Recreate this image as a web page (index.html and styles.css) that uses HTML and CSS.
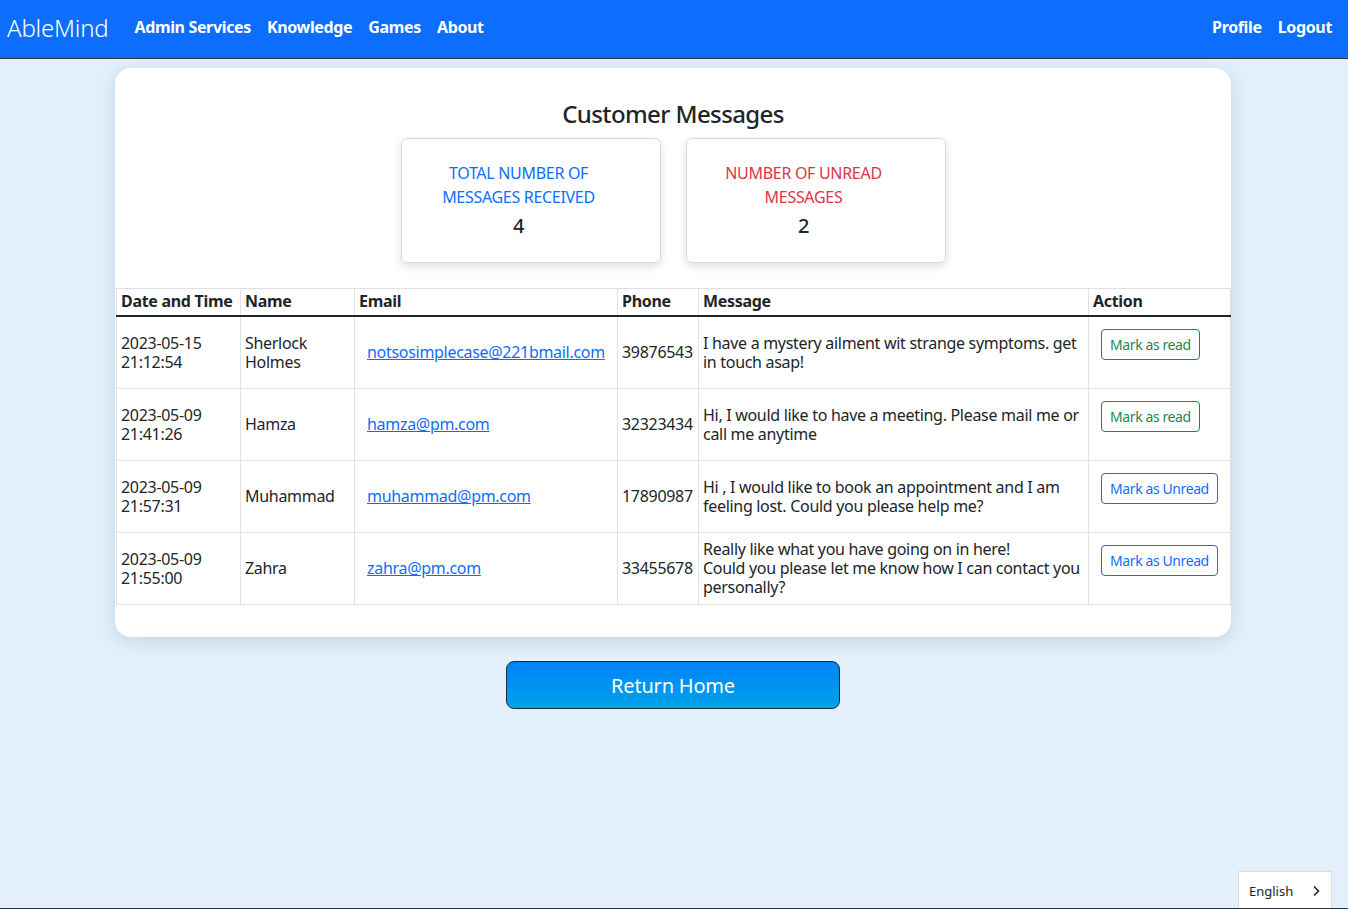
FILE: index.html
```html
<!DOCTYPE html>
<html lang="en">
<head>
<meta charset="utf-8">
<title>AbleMind - Customer Messages</title>
<link rel="stylesheet" href="styles.css">
</head>
<body>
<div class="page">
  <nav class="navbar">
    <a class="brand" href="#">AbleMind</a>
    <ul class="nav-links">
      <li><a href="#">Admin Services</a></li>
      <li><a href="#">Knowledge</a></li>
      <li><a href="#">Games</a></li>
      <li><a href="#">About</a></li>
    </ul>
    <ul class="nav-links nav-right">
      <li><a href="#">Profile</a></li>
      <li><a href="#">Logout</a></li>
    </ul>
  </nav>

  <main class="main">
    <section class="card">
      <h2 class="title">Customer Messages</h2>
      <div class="stats">
        <div class="stat">
          <p class="stat-label blue">TOTAL NUMBER OF<br>MESSAGES RECEIVED</p>
          <p class="stat-value">4</p>
        </div>
        <div class="stat">
          <p class="stat-label red">NUMBER OF UNREAD<br>MESSAGES</p>
          <p class="stat-value">2</p>
        </div>
      </div>

      <table class="msgs">
        <colgroup>
          <col class="c-date"><col class="c-name"><col class="c-email"><col class="c-phone"><col class="c-msg"><col class="c-action">
        </colgroup>
        <thead>
          <tr>
            <th>Date and Time</th>
            <th>Name</th>
            <th>Email</th>
            <th>Phone</th>
            <th>Message</th>
            <th>Action</th>
          </tr>
        </thead>
        <tbody>
          <tr>
            <td>2023-05-15<br>21:12:54</td>
            <td>Sherlock<br>Holmes</td>
            <td class="email"><a href="#">notsosimplecase@221bmail.com</a></td>
            <td>39876543</td>
            <td>I have a mystery ailment wit strange symptoms. get in touch asap!</td>
            <td class="action"><button class="btn btn-green">Mark as read</button></td>
          </tr>
          <tr>
            <td>2023-05-09<br>21:41:26</td>
            <td>Hamza</td>
            <td class="email"><a href="#">hamza@pm.com</a></td>
            <td>32323434</td>
            <td>Hi, I would like to have a meeting. Please mail me or call me anytime</td>
            <td class="action"><button class="btn btn-green">Mark as read</button></td>
          </tr>
          <tr>
            <td>2023-05-09<br>21:57:31</td>
            <td>Muhammad</td>
            <td class="email"><a href="#">muhammad@pm.com</a></td>
            <td>17890987</td>
            <td>Hi , I would like to book an appointment and I am feeling lost. Could you please help me?</td>
            <td class="action"><button class="btn btn-blue">Mark as Unread</button></td>
          </tr>
          <tr>
            <td>2023-05-09<br>21:55:00</td>
            <td>Zahra</td>
            <td class="email"><a href="#">zahra@pm.com</a></td>
            <td>33455678</td>
            <td>Really like what you have going on in here!<br>Could you please let me know how I can contact you personally?</td>
            <td class="action"><button class="btn btn-blue">Mark as Unread</button></td>
          </tr>
        </tbody>
      </table>
    </section>

    <div class="home-wrap">
      <a class="btn-home" href="#">Return Home</a>
    </div>
  </main>

  <footer class="footer-line"></footer>
</div>

<div class="lang">
  <span>English</span>
  <svg class="chev" width="10" height="12" viewBox="0 0 10 12"><path d="M3 1.5 L7.5 6 L3 10.5" fill="none" stroke="#222" stroke-width="1.6"/></svg>
</div>
</body>
</html>
```

FILE: styles.css
```css
* { box-sizing: border-box; }

html, body {
  margin: 0;
  padding: 0;
}

body {
  font-family: "Noto Sans", "DejaVu Sans", sans-serif;
  font-size: 16px;
  letter-spacing: -0.3px;
  color: #212529;
  background: #e3f0fb;
}

.page {
  min-height: 100vh;
  display: flex;
  flex-direction: column;
}

/* Navbar */
.navbar {
  height: 59px;
  background: #0d6efd;
  border-bottom: 1px solid #2b3440;
  display: flex;
  align-items: center;
  padding: 0 16px 4px 7px;
}

.brand {
  color: #fff;
  text-decoration: none;
  font-size: 24px;
  font-weight: 300;
  letter-spacing: -0.2px;
  margin-right: 18px;
}

.nav-links {
  list-style: none;
  margin: 0;
  padding: 0;
  display: flex;
}

.nav-links a {
  display: block;
  padding: 8px 8px;
  color: #fff;
  text-decoration: none;
  font-weight: 700;
  font-size: 16px;
  letter-spacing: -0.35px;
}

.nav-right {
  margin-left: auto;
}
.nav-right li:last-child a {
  padding-right: 0;
}

/* Main */
.main {
  flex: 1;
  display: flex;
  flex-direction: column;
  align-items: center;
  padding-top: 9px;
  padding-right: 2px;
}

.card {
  width: 1116px;
  background: #fff;
  border-radius: 16px;
  box-shadow: 0 4px 18px rgba(60, 90, 120, 0.18);
  padding: 0 1px 32px;
}

.title {
  margin: 0;
  padding-top: 31px;
  text-align: center;
  font-size: 24px;
  font-weight: 500;
  line-height: 30px;
  letter-spacing: -0.6px;
}

.stats {
  display: flex;
  justify-content: center;
  gap: 25px;
  margin-top: 9px;
}

.stat {
  width: 260px;
  height: 125px;
  border: 1px solid #d9d9d9;
  border-radius: 6px;
  box-shadow: 0 4px 10px rgba(0, 0, 0, 0.12);
  padding: 22px 36px 0 12px;
  text-align: center;
}

.stat p {
  margin: 0;
}

.stat-label {
  font-size: 16px;
  line-height: 24px;
}

.blue { color: #0d6efd; }
.red { color: #dc3545; }

.stat-value {
  margin-top: 5px !important;
  font-size: 20px;
  font-weight: 500;
  line-height: 24px;
}

/* Table */
.msgs {
  width: 100%;
  margin-top: 25px;
  border-collapse: collapse;
  table-layout: fixed;
}

.c-date { width: 124px; }
.c-name { width: 114px; }
.c-email { width: 263px; }
.c-phone { width: 81px; }
.c-msg { width: 390px; }
.c-action { width: 142px; }

.msgs th,
.msgs td {
  border: 1px solid #dee2e6;
  text-align: left;
  line-height: 19px;
}

.msgs th {
  padding: 3px 4px 4px;
  font-weight: 700;
  white-space: nowrap;
  border-bottom: 2px solid #212529;
}

.msgs td {
  padding: 4px;
  vertical-align: middle;
}

.msgs tr:first-child td {
  border-top: 0;
}

.msgs td.email {
  padding-left: 12px;
}

.msgs td a {
  color: #0d6efd;
  text-decoration: underline;
}

.msgs td.action {
  vertical-align: top;
  padding: 12px 8px 28px 12px;
}

.btn {
  display: inline-block;
  font-family: inherit;
  font-size: 14px;
  letter-spacing: -0.4px;
  line-height: 21px;
  padding: 4px 8px;
  background: #fff;
  border-radius: 4px;
  white-space: nowrap;
  cursor: pointer;
}

.btn-green {
  color: #198754;
  border: 1px solid #198754;
}

.btn-blue {
  color: #0d6efd;
  border: 1px solid #0d6efd;
}

/* Return home */
.home-wrap {
  margin-top: 24px;
}

.btn-home {
  display: flex;
  align-items: center;
  justify-content: center;
  width: 334px;
  height: 48px;
  border: 1px solid #1b2b3b;
  border-radius: 8px;
  background: linear-gradient(#0082f8, #00a3ea);
  color: #fff;
  font-size: 20px;
  letter-spacing: -0.2px;
  text-decoration: none;
}

.footer-line {
  height: 1px;
  background: #2b3440;
}

/* Language widget */
.lang {
  position: fixed;
  right: 16px;
  bottom: 1px;
  width: 94px;
  height: 37px;
  background: #fff;
  border: 1px solid #dcdcdc;
  border-bottom: 0;
  display: flex;
  align-items: center;
  justify-content: space-between;
  padding: 2px 10px 0 10px;
  font-size: 13px;
  letter-spacing: 0;
  color: #222;
}
```
